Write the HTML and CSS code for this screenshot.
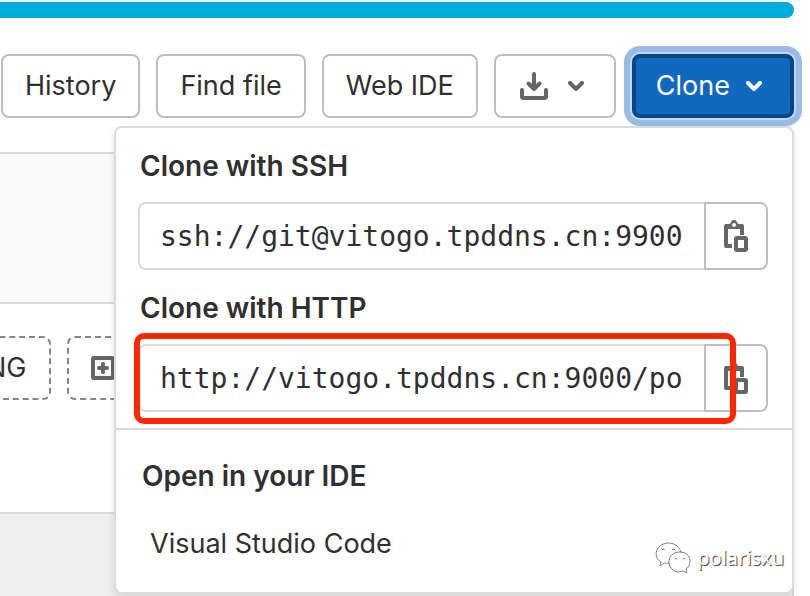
FILE: index.html
```
<!DOCTYPE html>
<html lang="en">
<head>
    <meta charset="UTF-8">
    <meta name="viewport" content="width=device-width, initial-scale=1.0">
    <title>Repository</title>
    <link rel="stylesheet" href="styles.css">
</head>
<body>
    <div class="language-bar"></div>

    <div class="tree-controls">
        <button class="btn">History</button>
        <button class="btn">Find file</button>
        <button class="btn">Web IDE</button>
        <button class="btn btn-download" aria-label="Download">
            <svg class="icon-download" viewBox="0 0 28 28">
                <path d="M14 2v15M8.500 11.500l5.500 5.500 5.500-5.500M2 18v6.500a1.500 1.500 0 0 0 1.500 1.500h21a1.500 1.500 0 0 0 1.500-1.500V18"/>
            </svg>
            <svg class="icon-chevron" viewBox="0 0 16 10"><path d="M2 2l6 6 6-6"/></svg>
        </button>
        <div class="clone">
            <button class="btn btn-clone" aria-expanded="true">
                Clone
                <svg class="icon-chevron" viewBox="0 0 16 10"><path d="M2 2l6 6 6-6"/></svg>
            </button>

            <div class="dropdown">
                <div class="clone-links">
                    <label for="sshUrl">Clone with SSH</label>
                    <div class="input-group">
                        <input type="text" id="sshUrl" value="ssh://git@vitogo.tpddns.cn:9900" readonly>
                        <button class="btn-copy" aria-label="Copy SSH URL">
                            <svg viewBox="0 0 24 32">
                                <path class="line" d="M8 26H2V7h16v8"/>
                                <path d="M0 9V6l1-2h4l2-1a3 3 0 0 1 6 0l2 1h4l1 2v3z"/>
                                <circle class="hole" cx="10" cy="5" r="2"/>
                                <rect class="line" x="12" y="18" width="10" height="12" rx="1"/>
                            </svg>
                        </button>
                    </div>
                    <label for="httpUrl">Clone with HTTP</label>
                    <div class="input-group">
                        <input type="text" id="httpUrl" value="http://vitogo.tpddns.cn:9000/po" readonly>
                        <button class="btn-copy" aria-label="Copy HTTP URL">
                            <svg viewBox="0 0 24 32">
                                <path class="line" d="M8 26H2V7h16v8"/>
                                <path d="M0 9V6l1-2h4l2-1a3 3 0 0 1 6 0l2 1h4l1 2v3z"/>
                                <circle class="hole" cx="10" cy="5" r="2"/>
                                <rect class="line" x="12" y="18" width="10" height="12" rx="1"/>
                            </svg>
                        </button>
                        <div class="highlight"></div>
                    </div>
                </div>
                <div class="ide-links">
                    <h2>Open in your IDE</h2>
                    <a href="#">Visual Studio Code</a>
                </div>
                <div class="watermark">
                    <svg viewBox="0 0 36 32">
                        <path d="M14 21c-2 1-4 0-5 0l-4 3 1-4C-3 14 1 2 13 1c7 0 12 4 13 10"/>
                        <path d="M31 27c7-5 5-17-6-17-14 0-15 18-2 20 2 0 4-1 5-1l4 2z"/>
                        <path d="M7 8q1-2 3 0M17 8q1-2 3 0M20 17q1-2 2 0M28 17q1-2 2 0"/>
                    </svg>
                    <span>polarisxu</span>
                </div>
            </div>
        </div>
    </div>

    <div class="last-commit"></div>

    <div class="project-buttons">
        <a class="btn btn-dashed" href="#">NG</a>
        <a class="btn btn-dashed" href="#" aria-label="Add">
            <svg class="icon-plus" viewBox="0 0 24 24">
                <rect x="2" y="2" width="20" height="20" rx="1"/>
                <path d="M12 8v8M8 12h8"/>
            </svg>
        </a>
    </div>

    <div class="file-header"></div>
</body>
</html>
```
FILE: styles.css
```
* {
    box-sizing: border-box;
}
body {
    display: flex;
    flex-direction: column;
    min-height: 100vh;
    margin: 0;
    overflow: hidden;
    background-color: #fff;
    color: #303030;
    font-family: Inter, sans-serif;
    font-size: 27px;
    line-height: 32px;
}
svg {
    flex: none;
    fill: none;
    stroke: #666;
    stroke-width: 4px;
    stroke-linecap: round;
    stroke-linejoin: round;
}
.language-bar {
    height: 16px;
    margin: 2px 16px 36px 0;
    border-radius: 0 8px 8px 0;
    background-color: #00acd9;
}
.tree-controls {
    display: flex;
    justify-content: flex-end;
    gap: 16px;
    padding-right: 16px;
}
.btn {
    display: flex;
    flex: none;
    align-items: center;
    height: 64px;
    padding: 0 22px;
    border: 2px solid #bfbfbf;
    border-radius: 8px;
    background-color: #fff;
    color: #303030;
    font: inherit;
    white-space: nowrap;
    text-decoration: none;
    cursor: pointer;
}
.btn-download {
    gap: 20px;
    padding: 0 30px 0 24px;
}
.icon-download {
    width: 28px;
    height: 28px;
}
.icon-chevron {
    width: 16px;
    height: 10px;
}
.clone {
    position: relative;
}
.btn-clone {
    gap: 16px;
    padding: 0 28px 0 20px;
    border: 4px solid #064787;
    background-color: #1068bf;
    color: #fff;
    box-shadow: 0 0 0 2px #c3d7f0, 0 0 0 8px #9abbe7;
}
.btn-clone svg {
    stroke: #fff;
}
.dropdown {
    position: absolute;
    top: 72px;
    right: 0;
    width: 680px;
    border: 2px solid #dbdbdb;
    border-radius: 8px;
    background-color: #fff;
    box-shadow: 0 4px 8px rgba(0, 0, 0, 0.1);
}
.clone-links {
    padding: 22px 24px 16px 22px;
    border-bottom: 2px solid #dbdbdb;
}
.clone-links label {
    display: block;
    margin: 0 2px 20px;
    font-size: 28px;
    font-weight: 600;
}
.input-group {
    position: relative;
    display: flex;
}
.input-group + label {
    margin-top: 22px;
}
.input-group input {
    flex: 1;
    min-width: 0;
    height: 68px;
    padding: 0 20px;
    border: 2px solid #dbdbdb;
    border-right: none;
    border-radius: 8px 0 0 8px;
    color: #303030;
    font-family: "DejaVu Sans Mono", monospace;
    font-size: 28px;
}
.btn-copy {
    display: flex;
    align-items: center;
    justify-content: center;
    width: 64px;
    padding: 0;
    border: 2px solid #bfbfbf;
    border-radius: 0 8px 8px 0;
    background-color: #fff;
    cursor: pointer;
}
.btn-copy svg {
    width: 24px;
    height: 32px;
    fill: #666;
    stroke: none;
}
.btn-copy .line {
    fill: none;
    stroke: #666;
    stroke-linecap: butt;
}
.btn-copy .hole {
    fill: #fff;
}
/* red frame round the HTTP address */
.highlight {
    position: absolute;
    top: -11px;
    right: 32px;
    bottom: -12px;
    left: -4px;
    border: 6px solid #ff2600;
    border-radius: 10px;
    pointer-events: none;
}
.ide-links {
    padding: 30px 26px 32px;
}
.ide-links h2 {
    margin: 0 0 36px;
    font-size: 28px;
    font-weight: 600;
}
.ide-links a {
    display: block;
    padding: 0 8px;
    color: #303030;
    text-decoration: none;
}
.watermark {
    position: absolute;
    right: 8px;
    bottom: 18px;
    display: flex;
    align-items: center;
    gap: 6px;
    color: #fff;
    font-family: "Noto Sans", sans-serif;
    font-size: 20px;
    text-shadow: 1px 1px 1px #333;
}
.watermark svg {
    width: 36px;
    height: 32px;
    stroke: #777;
    stroke-width: 1px;
    stroke-dasharray: 3 1;
}
.last-commit {
    height: 152px;
    margin: 34px 16px 0 0;
    border: 2px solid #dbdbdb;
    border-left: none;
    background-color: #fafafa;
}
/* the row runs off the left edge */
.project-buttons {
    display: flex;
    gap: 16px;
    margin-left: -38px;
    padding: 32px 0 112px;
}
.btn-dashed {
    border: 2px dashed #868686;
}
.icon-plus {
    width: 24px;
    height: 24px;
}
.file-header {
    flex: 1;
    margin-right: 16px;
    border: 2px solid #dbdbdb;
    border-width: 2px 2px 0 0;
    background-color: #efefef;
}
```
